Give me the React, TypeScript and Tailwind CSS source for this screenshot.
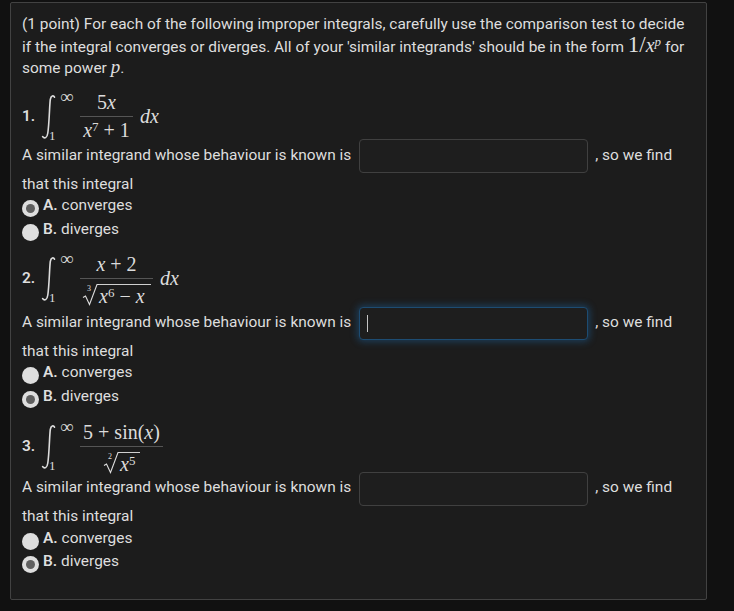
import type { ReactNode } from "react";

const serif = "font-['Liberation_Serif',serif]";

function I({ children }: { children: ReactNode }) {
  return <span className={`${serif} italic`}>{children}</span>;
}

function Op({ children }: { children: ReactNode }) {
  return <span className="mx-[5px]">{children}</span>;
}

function IntegralSign() {
  return (
    <div className="relative w-[39px] h-[46px] shrink-0">
      <svg width="16" height="46" viewBox="0 0 16 46" className="absolute left-0 top-0 text-[#dcdcdc]">
        <path
          d="M13.5 3.2C12.6 1.2 10 1.2 9.3 5.5C8.6 10 8.2 30 6.8 39C6.2 44 3.4 45 1.6 42.6"
          fill="none"
          stroke="currentColor"
          strokeWidth="1.6"
          strokeLinecap="round"
        />
      </svg>
      <span className={`absolute left-[19px] top-[-5px] text-[19px] leading-[16px] text-[#d4d4d4] ${serif}`}>∞</span>
      <span className={`absolute left-[8px] top-[35px] text-[13px] leading-[14px] text-[#dcdcdc] ${serif}`}>1</span>
    </div>
  );
}

function Fraction({ num, den, width, denPad }: { num: ReactNode; den: ReactNode; width: string; denPad: string }) {
  return (
    <div className={`flex flex-col ${width} shrink-0 text-[20px] text-[#dcdcdc] ${serif}`}>
      <div className="h-[28px] flex items-end justify-center pb-[3px] leading-[22px] whitespace-nowrap">{num}</div>
      <div className="h-px bg-[#555555]" />
      <div className={`h-[28px] flex items-start justify-center leading-[22px] whitespace-nowrap ${denPad}`}>{den}</div>
    </div>
  );
}

function Radical({ index, children, width }: { index: string; children: ReactNode; width: string }) {
  return (
    <span className="inline-flex items-start">
      <span className="relative w-[17px] h-[24px] shrink-0">
        <svg width="17" height="24" viewBox="0 0 17 24" className="absolute left-0 top-0 text-[#dcdcdc]">
          <path d="M1 14.5L3.5 13L7.5 21.5L15 1.5L17 1.5" fill="none" stroke="currentColor" strokeWidth="1.1" />
        </svg>
        <span className="absolute left-[5px] top-[1px] text-[8px] leading-[9px]">{index}</span>
      </span>
      <span className={`${width} border-t border-[#cfcfcf] mt-[1px] leading-[22px] whitespace-nowrap`}>{children}</span>
    </span>
  );
}

function Choice({ label, text, selected }: { label: string; text: string; selected: boolean }) {
  return (
    <div className="flex items-start h-[23.5px]">
      <div className="mt-[5px] w-[17px] h-[17px] rounded-full bg-[#dedede] shrink-0 flex items-center justify-center">
        {selected && <div className="w-[9px] h-[9px] rounded-full bg-[#5f5f5f]" />}
      </div>
      <div className="ml-[4px] leading-[21px] whitespace-nowrap">
        <b className="font-semibold">{label}</b> {text}
      </div>
    </div>
  );
}

function AnswerRow({ focused, height, lift }: { focused?: boolean; height: string; lift: string }) {
  return (
    <div className={`flex items-center ${height} whitespace-nowrap`}>
      <span className={`relative ${lift}`}>A similar integrand whose behaviour is known is</span>
      <div className="relative ml-[8px] shrink-0">
        <input
          readOnly
          aria-label="similar integrand"
          className={
            focused
              ? "block w-[229px] h-[33px] rounded-[4px] bg-[#1e1e1e] border border-[#1d4c72] shadow-[0_0_7px_2px_rgba(28,100,160,0.45)] outline-none"
              : "block w-[229px] h-[34px] rounded-[4px] bg-[#1e1e1e] border border-[#404040] outline-none"
          }
        />
        {focused && <div className="absolute left-[8px] top-[8px] w-px h-[17px] bg-[#c4c4c4]" />}
      </div>
      <span className={`relative ${lift} ml-[7px]`}>, so we find</span>
    </div>
  );
}

function Problem({
  n,
  height,
  pad,
  fraction,
  tail,
  answer,
  rowHeight,
  lift,
  thatHeight,
  focused,
}: {
  n: string;
  height: string;
  pad: string;
  fraction: ReactNode;
  tail?: ReactNode;
  answer: "A" | "B";
  rowHeight: string;
  lift: string;
  thatHeight: string;
  focused?: boolean;
}) {
  return (
    <section>
      <div className={`flex items-start ${height} ${pad}`}>
        <div className="flex items-center h-[57px]">
          <b className="font-semibold w-[19px] shrink-0">{n}</b>
          <IntegralSign />
          {fraction}
          {tail}
        </div>
      </div>
      <AnswerRow focused={focused} height={rowHeight} lift={lift} />
      <div className={`${thatHeight} leading-[22px]`}>that this integral</div>
      <Choice label="A." text="converges" selected={answer === "A"} />
      <Choice label="B." text="diverges" selected={answer === "B"} />
    </section>
  );
}

function Dx() {
  return <span className={`relative -top-px ml-[7px] text-[20px] text-[#dcdcdc] italic ${serif}`}>dx</span>;
}

export default function App() {
  return (
    <div className="w-[734px] h-[611px] bg-[#111111] pt-[2px] pl-[10px] overflow-hidden font-['Roboto',sans-serif] text-[15.45px] text-[#dedede]">
      <main className="w-[697px] h-[598px] bg-[#1c1c1c] border border-[#424242] rounded-[2px] pl-[11px] pt-[10px]">
        <p className="leading-[22px] h-[66px]">
          (1 point) For each of the following improper integrals, carefully use the comparison test to decide
          <br />
          if the integral converges or diverges. All of your 'similar integrands' should be in the form{" "}
          <span className={`${serif} text-[23px] leading-[20px]`}>1/</span>
          <span className={`${serif} italic text-[20px] leading-[20px]`}>x</span>
          <sup className={`${serif} italic text-[13px] leading-[0]`}>p</sup> for
          <br />
          <span className="relative -top-px">
            some power <span className={`${serif} italic text-[19px] leading-[20px]`}>p</span>.
          </span>
        </p>
        <Problem
          n="1."
          height="h-[60px]"
          pad="pt-[9px]"
          rowHeight="h-[34px]"
          lift="top-0"
          thatHeight="h-[22px]"
          answer="A"
          fraction={
            <Fraction
              width="w-[53px]"
              denPad="pt-[2px]"
              num={<span>5<I>x</I></span>}
              den={<span><I>x</I><sup className="text-[13px] leading-[0]">7</sup><Op>+</Op>1</span>}
            />
          }
          tail={<Dx />}
        />
        <Problem
          n="2."
          height="h-[65px]"
          pad="pt-[8px]"
          rowHeight="h-[33px]"
          lift="-top-px"
          thatHeight="h-[22px]"
          answer="B"
          focused
          fraction={
            <Fraction
              width="w-[73px]"
              denPad="pt-[4px]"
              num={<span><I>x</I><Op>+</Op>2</span>}
              den={
                <Radical index="3" width="w-[52px]">
                  <I>x</I>
                  <sup className="text-[13px] leading-[0]">6</sup><Op>−</Op><I>x</I>
                </Radical>
              }
            />
          }
          tail={<Dx />}
        />
        <Problem
          n="3."
          height="h-[63px]"
          pad="pt-[9px]"
          rowHeight="h-[33px]"
          lift="-top-px"
          thatHeight="h-[22.5px]"
          answer="B"
          fraction={
            <Fraction
              width="w-[83px]"
              denPad="pt-[4px]"
              num={<span>5<Op>+</Op>sin(<I>x</I>)</span>}
              den={
                <Radical index="2" width="w-[20px]">
                  <I>x</I>
                  <sup className="text-[13px] leading-[0]">5</sup>
                </Radical>
              }
            />
          }
        />
      </main>
    </div>
  );
}
